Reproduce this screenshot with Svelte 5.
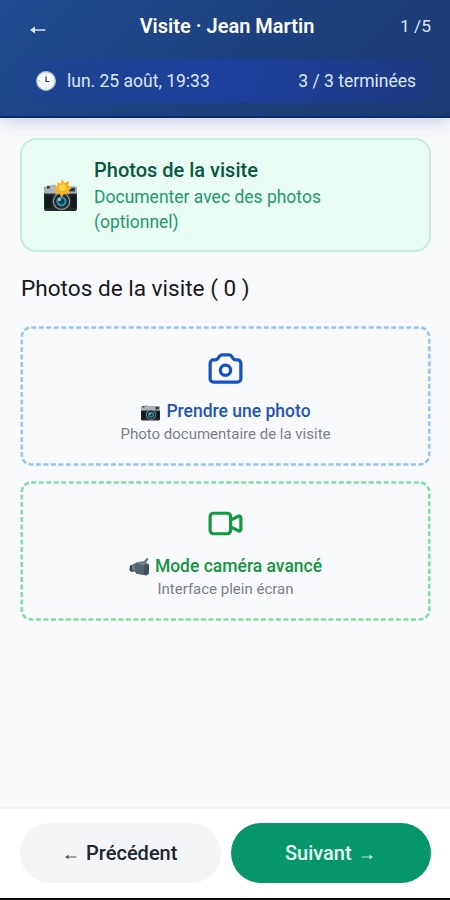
<script>
  const actions = [
    { kind: 'photo', label: 'Prendre une photo', hint: 'Photo documentaire de la visite' },
    { kind: 'video', label: 'Mode caméra avancé', hint: 'Interface plein écran' }
  ];
</script>

{#snippet stillCamera(flash)}
  <rect x="1" y="8" width="34" height="25" rx="2" fill="#252a2c" />
  <path d="M1 15V11q0-3 3-3h3l1-2h5l1 2h19q2 0 2 3v4z" fill="#a9b5bb" />
  <rect x="4" y="7" width="3" height="3" fill="#3b454b" />
  <rect x="27" y="9" width="6" height="4" rx="1" fill="#30393e" />
  <path d="M2 17h7v13H2zM29 17h5v13h-5z" fill="#15191b" />
  <circle cx="19" cy="23" r="9" fill="#8a969c" />
  <circle cx="19" cy="23" r="7.7" fill="#20292e" />
  <circle cx="19" cy="23" r="5.3" fill="#348caa" />
  <circle cx="19" cy="23" r="3" fill="#163e55" />
  <circle cx="17" cy="21" r="1.6" fill="#8acbd9" />
  {#if flash}
    <path d="M20 0l2 4 5-2-1 5 4 2-4 3 1 4-5-1-3 4-2-4-5 1 2-4-4-3 5-1-1-5 4 2z" fill="#f6b526" />
    <circle cx="20" cy="9" r="3.4" fill="#ffdd48" />
  {/if}
{/snippet}

<div class="screen">
  <header>
    <div class="bar">
      <svg class="back" viewBox="0 0 16 8"><path d="M3 4h12.5" /><path class="head" d="M0 4l5-3.5v7z" /></svg>
      <h1>Visite · Jean Martin</h1>
      <span class="step">1 /5</span>
    </div>
    <div class="status">
      <svg class="clock" viewBox="0 0 20 20">
        <circle cx="10" cy="10" r="9.3" fill="#f7fafa" stroke="#b1c4d4" stroke-width="1.3" />
        <path d="M10 5.5V10.5h3.5" fill="none" stroke="#35393d" stroke-width="1.2" />
        <path d="M10 2.5v1M10 16.5v1M2.5 10h1M16.5 10h1" stroke="#8a9499" />
      </svg>
      <span class="date">lun. 25 août, 19:33</span>
      <span class="done">3 / 3 terminées</span>
    </div>
  </header>

  <main>
    <section class="intro">
      <svg viewBox="0 0 36 34">{@render stillCamera(true)}</svg>
      <div>
        <h2>Photos de la visite</h2>
        <p>Documenter avec des photos (optionnel)</p>
      </div>
    </section>

    <h3>Photos de la visite ( 0 )</h3>

    <div class="actions">
      {#each actions as action}
        <button class={action.kind}>
          <svg class="frame" viewBox="0 0 411 140">
            <rect x="1.75" y="1.5" width="407.5" height="137" rx="9.5" />
          </svg>
          <svg class="outline" viewBox="0 0 24 24">
            {#if action.kind === 'photo'}
              <path d="M3 9a2 2 0 012-2h.93a2 2 0 001.664-.89l.812-1.22A2 2 0 0110.07 4h3.86a2 2 0 011.664.89l.812 1.22A2 2 0 0018.07 7H19a2 2 0 012 2v9a2 2 0 01-2 2H5a2 2 0 01-2-2V9z" />
              <path d="M15 13a3 3 0 11-6 0 3 3 0 016 0z" />
            {:else}
              <path d="M15 10l4.553-2.276A1 1 0 0121 8.618v6.764a1 1 0 01-1.447.894L15 14M5 18h8a2 2 0 002-2V8a2 2 0 00-2-2H5a2 2 0 00-2 2v8a2 2 0 002 2z" />
            {/if}
          </svg>
          <span class="label">
            {#if action.kind === 'photo'}
              <svg viewBox="0 0 36 34">{@render stillCamera(false)}</svg>
            {:else}
              <svg viewBox="0 0 36 34">
                <path d="M1 15l9-3 2 13-9 2-3-4z" fill="#34454e" />
                <path d="M9 11l17-2 9 4v16l-5 4-18-3-3-5z" fill="#52656f" />
                <path d="M10 10l16-3 6-6 2 3-4 7 5 2-9 2z" fill="#70838c" />
                <path d="M27 13l8 1v15l-5 4-4-3z" fill="#3e505a" />
                <path d="M4 15l5-2 1 10-5 1z" fill="#71858f" />
              </svg>
            {/if}
            <span>{action.label}</span>
          </span>
          <span class="hint">{action.hint}</span>
        </button>
      {/each}
    </div>
  </main>

  <footer>
    <button class="prev">
      <svg viewBox="0 0 12 8"><path d="M2 4h9.5" /><path class="head" d="M0 4l3.5-2.3v4.6z" /></svg>
      <span>Précédent</span>
    </button>
    <button class="next">
      <span>Suivant</span>
      <svg viewBox="0 0 12 8"><path d="M.5 4h9" /><path class="head" d="M12 4L8.5 1.5v5z" /></svg>
    </button>
  </footer>
</div>

<style>
  :global(body) { margin: 0; }
  * { box-sizing: border-box; }
  h1, h2, h3, p { margin: 0; font-weight: 500; }
  svg { display: block; flex: none; }
  button { font: inherit; margin: 0; }
  .screen {
    width: 450px; height: 900px; display: flex; flex-direction: column;
    font-family: Roboto, sans-serif; background: #f9fafc; color: #17191c;
    border-bottom: 2px solid #050505; overflow: hidden; white-space: nowrap;
  }
  header {
    height: 118px; flex: none; padding: 7px 19px 0 20px;
    background: linear-gradient(135deg, #204b91 0%, #1d4180 50%, #1b3970 100%);
    border-bottom: 2px solid #082b72; box-shadow: 0 4px 16px #1e3a8a38;
    color: #dce8ff;
  }
  .bar { height: 38px; display: grid; grid-template-columns: 1fr auto 1fr; align-items: center; }
  .back { width: 16px; height: 8px; margin: 8px 0 0 10px; stroke: #d6e2f4; stroke-width: 1.5; }
  .head { stroke: none; fill: currentColor; }
  h1 { font-size: 20px; line-height: 26px; color: #fff; font-weight: 600; margin-left: 3px; }
  .step { font-size: 17.4px; text-align: right; }
  .status {
    display: flex; align-items: center; height: 44px; margin-top: 14px; padding: 0 15px 0 16px;
    border-radius: 10px; background: linear-gradient(90deg, #1e40924d, #1e40afa0 50%, #1e3a8a99);
    font-size: 17.5px;
  }
  .clock { width: 20px; height: 20px; margin-right: 11px; }
  .done { margin-left: auto; }
  main { flex: 1; padding: 20px 19px 0 20px; }
  .intro {
    display: flex; align-items: center; height: 114px; padding: 0 21px; gap: 16px;
    background: #eafdf4; border: 2px solid #c5efdc; border-radius: 16px;
  }
  .intro svg { width: 35px; height: 33px; }
  h2 { font-size: 20px; line-height: 29px; color: #075741; }
  .intro p { font-size: 17.5px; line-height: 25px; color: #26966f; font-weight: 400; white-space: normal; }
  h3 { font-size: 22.6px; line-height: 32px; font-weight: 400; margin: 21px 0 21px 1px; }
  .actions { display: flex; flex-direction: column; gap: 15px; }
  .actions button {
    position: relative; width: 411px; height: 140px; padding: 22px 0 0; border: 0;
    background: transparent; display: flex; flex-direction: column; align-items: center;
  }
  .frame { position: absolute; inset: 0; width: 411px; height: 140px; fill: none; stroke: #9cc6ee; stroke-width: 2.6; stroke-dasharray: 5 2.5; }
  .outline { width: 41px; height: 41px; fill: none; stroke: #1853c3; stroke-width: 1.9; stroke-linecap: round; stroke-linejoin: round; }
  .label { display: flex; align-items: center; gap: 5px; height: 26px; margin-top: 9px; color: #1d55b7; font-size: 17.5px; font-weight: 500; }
  .label svg { width: 21px; height: 19px; }
  .hint { font-size: 15px; line-height: 21px; color: #7b7f86; }
  .video .frame { stroke: #82dfa7; }
  .video .outline { stroke: #139b43; }
  .video .label { color: #159344; }
  footer { height: 91px; flex: none; padding: 14px 19px 0 20px; display: flex; gap: 10px; background: #fff; border-top: 2px solid #f0f2f4; }
  footer button {
    width: 200.5px; height: 60px; border: 0; border-radius: 30px; background: #f3f5f7;
    display: flex; align-items: center; justify-content: center; gap: 9px; padding: 0 0 0 2px;
    font-size: 20px; font-weight: 500; color: #20252f;
  }
  footer svg { width: 12px; height: 8px; margin-top: 7px; stroke: currentColor; stroke-width: 1; opacity: .75; }
  footer .next { background: #079669; color: #e5fff5; padding: 0 4px 0 0; }
</style>
